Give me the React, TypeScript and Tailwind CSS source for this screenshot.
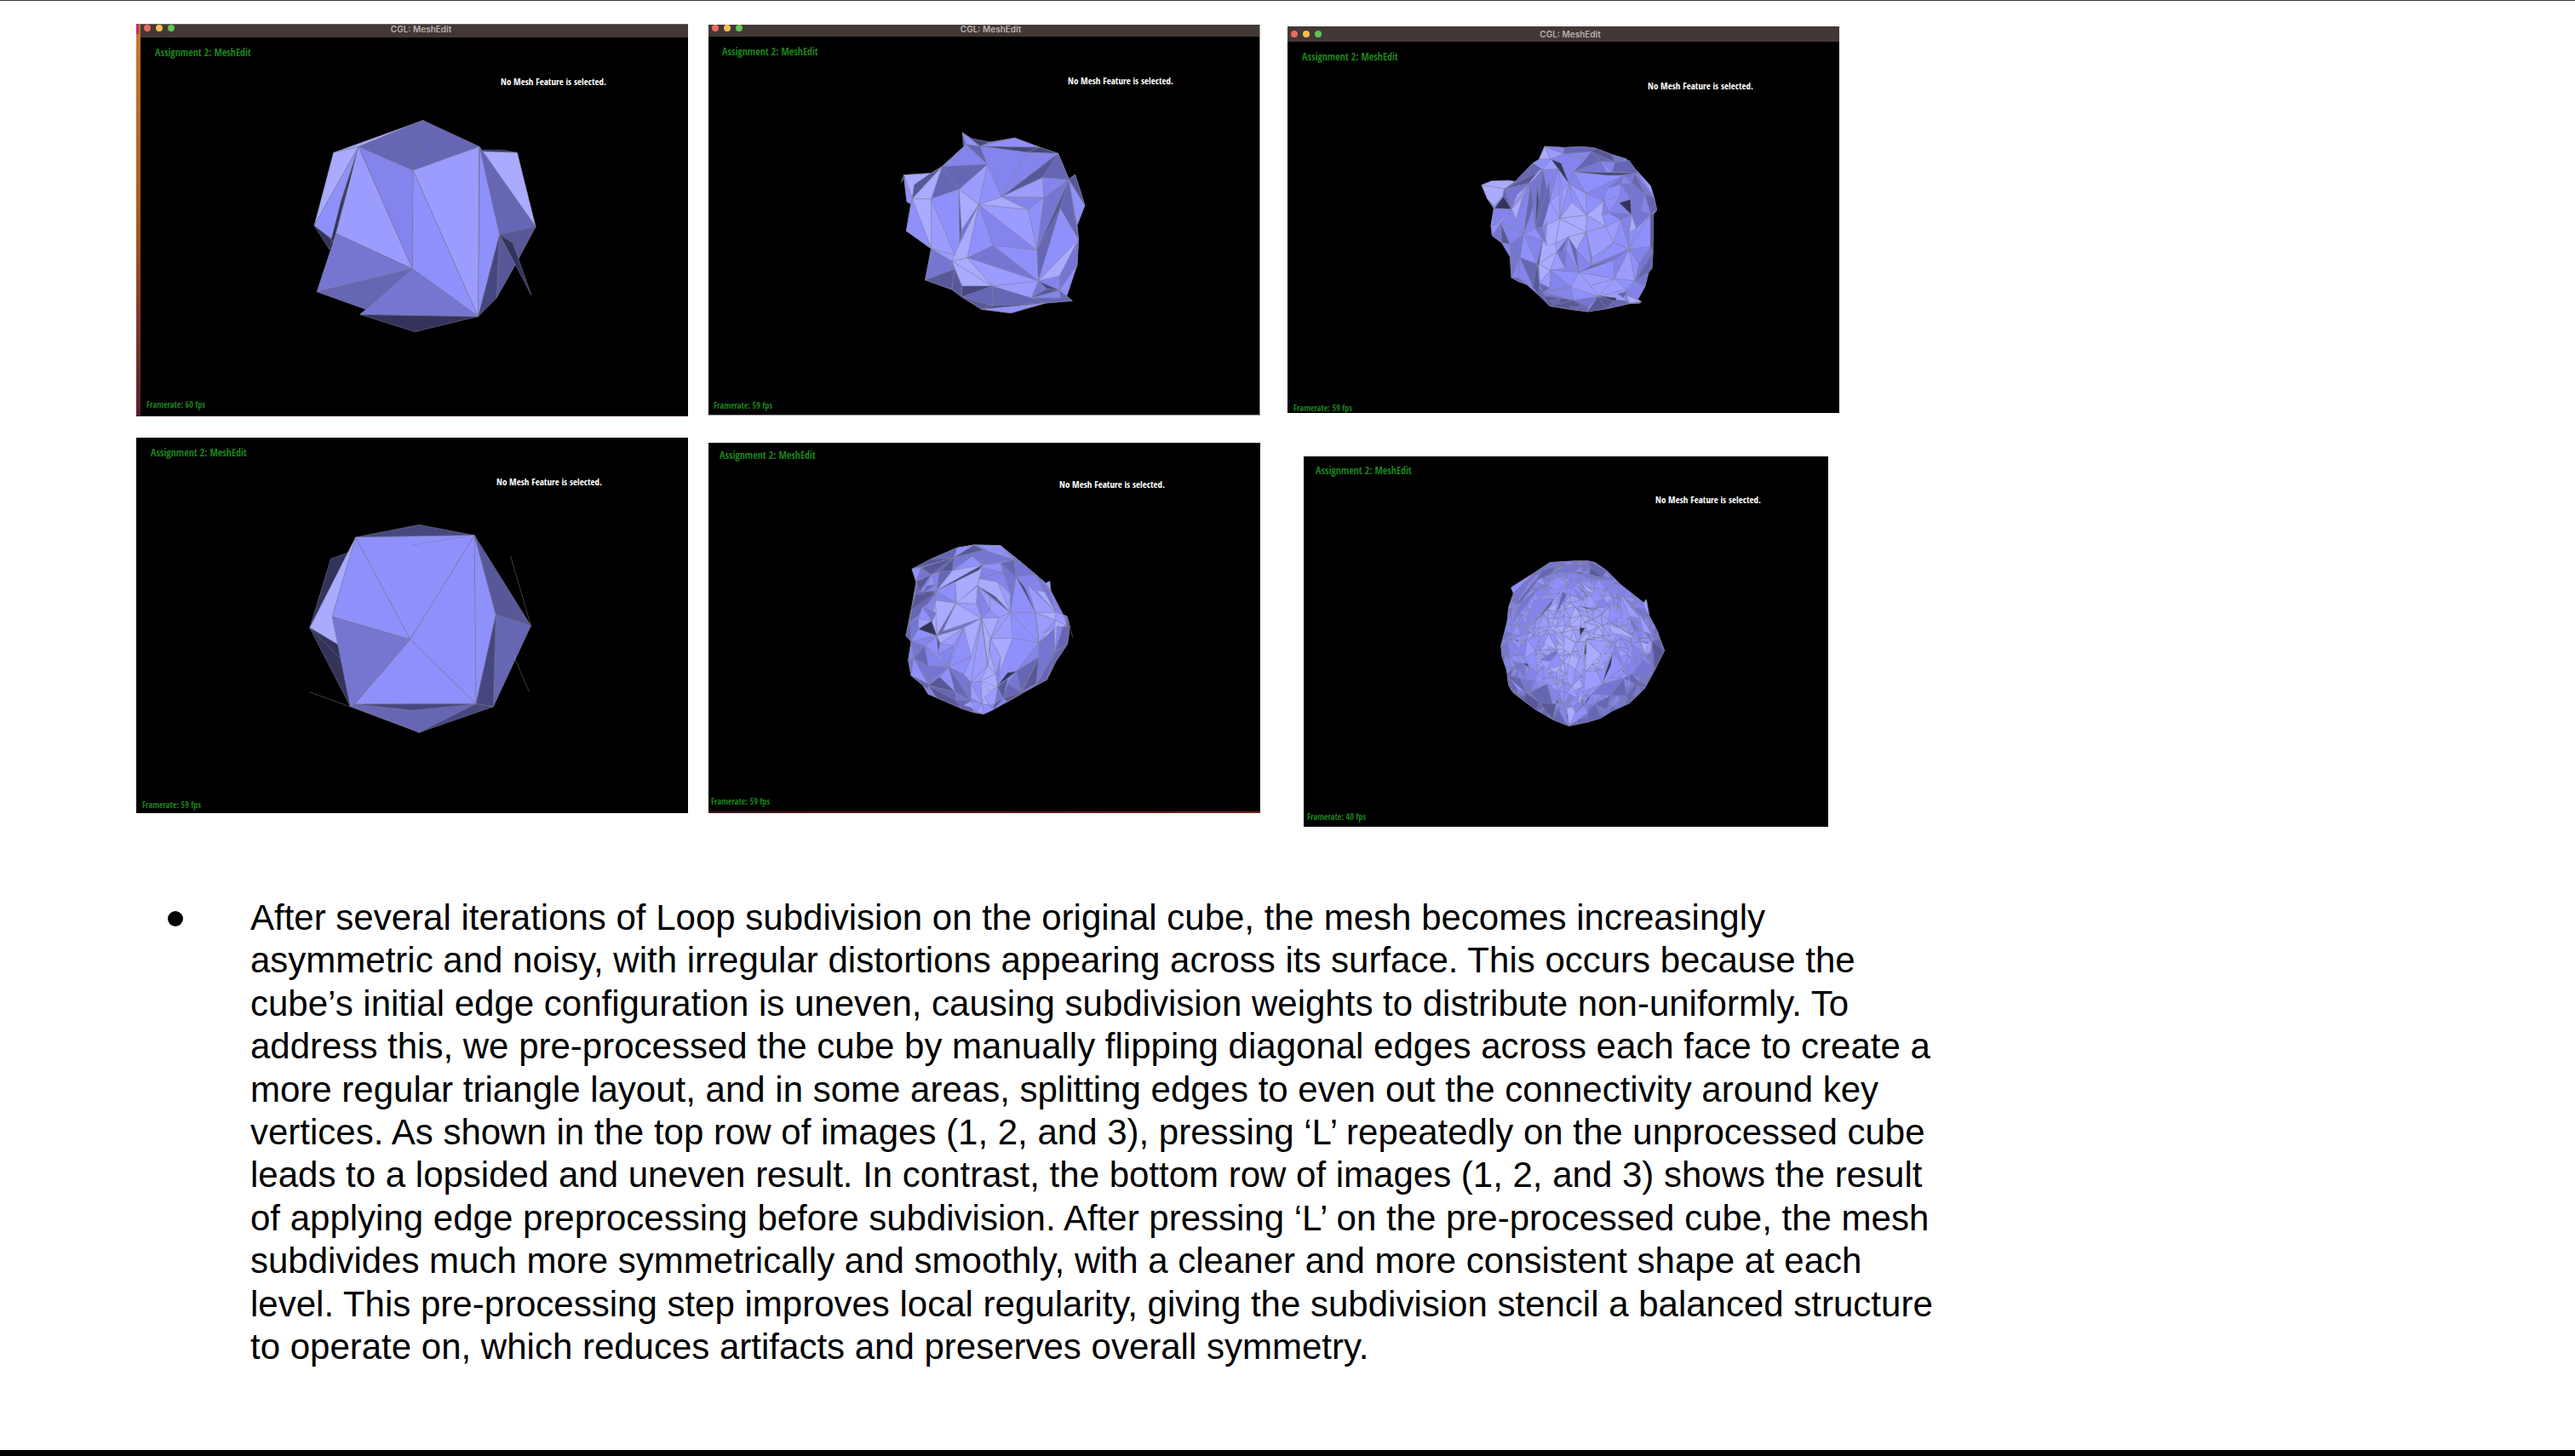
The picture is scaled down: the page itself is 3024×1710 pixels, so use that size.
import type { ReactNode } from "react";

/* Facet shades, from unlit to fully lit. */
const SHADES = [
  "#33335c",
  "#474780",
  "#585899",
  "#6666b5",
  "#7676d2",
  "#8484ec",
  "#9090fc",
  "#9c9cff",
  "#aaaaff",
];

/* Each facet is written as "x y x y x y:shade". */
type MeshProps = {
  transform: string;
  outline?: string;
  facets: string;
  lines?: string[];
  extra?: ReactNode;
};

function Mesh({ transform, outline, facets, lines = [], extra }: MeshProps) {
  const list = facets
    .trim()
    .split(/\s*\n\s*/)
    .flatMap((row) => row.split("|"))
    .map((item) => item.trim().split(":"));
  return (
    <g transform={transform} strokeLinejoin="round">
      {outline && (
        <polygon points={outline} fill={SHADES[5]} stroke="#77778c" strokeWidth={1} vectorEffect="non-scaling-stroke" />
      )}
      {extra}
      <g stroke="#80809a" strokeOpacity={0.6} strokeWidth={0.8}>
        {list.map(([points, shade], i) => (
          <polygon key={i} points={points} fill={SHADES[Number(shade)]} vectorEffect="non-scaling-stroke" />
        ))}
      </g>
      <g stroke="#777783" strokeOpacity={0.65} strokeWidth={0.8} fill="none">
        {lines.map((points) => (
          <polyline key={points} points={points} vectorEffect="non-scaling-stroke" />
        ))}
      </g>
    </g>
  );
}

const CUBE_A = `
580 508 823 394 648 487:8|580 508 648 487 528 765:8|648 487 528 765 575 812 600 680:6
528 765 577 815 570 850:0|648 487 597 700 574 812 580 830 588 790 622 600:0
648 487 794 917 587 793:7|587 793 794 917 535 998:4|535 998 794 917 667 1060:3
985 498 1040 499 1078 508 985 506:0|980 503 1078 508 1128 769:8
648 487 823 394 796 570:3|823 394 976 487 796 570:3|648 487 796 570 794 917:5
796 570 972 1085 794 917:6|796 570 975 487 972 1085:7|976 487 1030 796 972 1085:6
976 487 1128 769 1030 796:3|1030 796 1128 769 1072 905 1022 1020:2
1030 796 1022 1020 972 1085:1|1030 796 1066 826 1116 1010:0
652 1078 972 1085 801 1139:0|794 917 972 1085 652 1078:4`;

const CUBE_B = `
573 469 622 446 516 712:0|640 393 516 712 593 772 577 673:8|516 712 593 772 600 820 626 990:0
640 393 812 349 962 386:1|640 393 788 753 577 673:6|640 393 962 386 788 753:6|962 386 966 980 788 753:6
962 386 1020 666 966 980:6|962 386 1115 705 1020 666:2|1020 666 1115 705 1013 990:3
1020 666 1013 990 966 980:1|577 673 788 753 638 981 626 990:4|788 753 966 980 638 981:6
626 990 638 981 966 980 812 1081:3|638 981 966 980 795 1003:1|966 980 1013 990 812 1081:1`;

const LEVEL2_A_OUTLINE =
  "272 48 305 70 367 82 457 67 545 100 610 122 648 212 670 197 704 305 677 375 682 425 677 515 640 625 660 642 565 650 443 685 340 672 270 628 235 602 141 568 162 458 74 395 90 300 76 292 65 198 160 192 200 168 285 90";
const LEVEL2_A = `
272 48 285 90 275 97:3|272 48 335 96 285 90:6|300 68 367 82 335 96:1|335 96 457 67 545 100:6
335 96 545 100 500 118:1|545 100 610 122 500 118:1|285 90 335 96 360 160:3|285 90 360 160 200 168:5
335 96 500 118 410 275 360 160:5|500 118 610 122 410 275:5|610 122 555 207 410 275:2
610 122 648 215 555 207:3|410 275 555 207 560 277:7|555 207 648 215 560 277:5
410 275 560 277 505 320:5|410 275 505 320 330 302:8|360 160 410 275 330 302:6
360 160 330 302 260 248:7|200 168 360 160 260 248:3|200 168 260 248 162 282:3
65 198 160 192 102 232 95 282:8|65 198 95 282 90 300 76 292:6|65 198 55 225 68 208:1|160 192 200 168 95 282 102 232:2
200 168 162 282 95 282:8|95 282 162 282 162 458:8|95 282 162 458 74 395:6
162 282 245 480 162 458:7|162 282 260 248 262 440 245 480:6|162 458 245 480 235 502:7
260 248 330 302 268 395:8|260 248 268 395 263 440:1|268 395 330 302 262 450:4
330 302 290 490 235 502 262 440:8|235 502 378 590 270 590:8|290 490 378 590 235 502:8
330 302 380 447 290 490:6|330 302 535 463 380 447:5|330 302 505 320 535 463:7
505 320 560 277 535 463:6|560 277 648 215 535 463:4|648 215 618 315 535 463:2
618 315 540 572 535 463:3|618 315 682 425 540 572:6|648 215 682 425 618 315:3
648 215 704 305 677 375:6|648 212 670 197 704 305:2|380 447 535 463 540 572:6
380 447 540 572 290 490:4|290 490 540 572 378 590:7|682 425 615 555 540 572:8
682 425 677 515 615 605 615 555:4|677 515 640 625 615 605:6|540 572 615 555 615 605:5
540 572 615 605 570 600:1|540 572 570 600 515 632:4|540 572 378 590 515 632:7
570 600 615 605 515 632:2|515 632 615 605 620 632:5|515 632 620 632 615 605 660 642 565 650:3
378 590 515 632 565 650 380 660:3|270 628 378 590 380 660:3|270 590 378 590 270 628:1
380 660 565 650 340 672:1|340 672 565 650 443 685:6|270 628 380 660 340 672:2
162 458 235 502 245 530 141 568:4|141 568 245 530 235 602:2|245 530 270 590 270 628 235 602:2`;

const LEVEL3_A_OUTLINE =
  "282 66 350 70 415 67 460 72 520 95 570 110 610 155 655 205 668 248 677 290 665 305 663 440 660 495 648 510 635 560 610 605 622 612 618 618 580 620 500 638 433 648 370 640 300 628 262 590 218 552 190 542 165 528 160 455 130 405 97 380 93 345 103 285 80 250 60 202 95 188 155 186 178 190 240 125 262 112";
const LEVEL3_A = `
282 66 303 110 262 112:8|282 66 350 92 303 110:7|282 66 350 70 350 92:5|350 70 415 67 460 72 445 85 350 92:3
303 110 350 92 425 112 385 155 368 198:5|350 92 445 85 425 112:5|305 112 340 125 368 198:0
445 85 480 118 385 155 425 112:3|460 72 520 95 530 122 445 85:2|445 85 530 122 480 118:3
520 95 570 110 530 122:4|480 118 500 155 385 155:4|480 118 520 155 500 155:6|480 118 530 122 520 155:5
530 122 580 115 610 160 520 155:3|385 155 610 160 545 168 500 168:1|385 157 500 168 560 168 427 232:6
385 157 427 232 368 198:5|560 168 490 258 427 232:5|560 168 600 160 590 195:4|560 168 550 200 505 212:4
505 212 550 200 548 240 490 258:6|550 200 590 195 588 255:4|590 195 600 160 635 235:3|600 160 668 248 635 235:4
610 155 655 205 668 248:7|635 235 668 248 677 290 655 305:3|590 195 635 235 620 295 587 305:4
635 235 655 305 620 292:5|490 258 548 240 510 300:6|548 240 587 305 510 300:5|545 265 585 252 587 305:0
427 232 490 258 430 308:6|490 258 485 308 497 348 430 308:8|490 258 510 300 485 308:5
485 308 510 300 550 325 497 348:6|430 308 497 348 428 368:7|497 348 550 325 525 405:7|428 368 497 348 525 405 448 460:7
587 305 620 292 655 305 605 355:4|587 305 605 355 580 370:8|587 305 580 370 550 325:5|510 300 587 305 550 325:4
550 325 580 370 580 428:5|550 325 580 428 525 405:6|605 355 655 305 580 428:6|655 305 655 418 580 428:6|580 370 605 355 580 428:6
655 305 665 305 663 440 655 418:2|368 198 427 232 430 308:7|368 198 430 308 378 262:6
368 198 378 262 335 320:6|378 262 430 308 335 320:8|335 320 430 308 428 368:8|335 320 428 368 320 408:8
300 260 368 198 335 320:7|300 192 330 145 300 260:5|330 145 368 198 300 260:6|330 145 345 230 335 320:6
320 408 428 368 365 385:7|365 385 428 368 395 432:8|320 408 365 385 325 438:7|365 385 325 438 330 470:3
365 385 358 430 330 470:5|365 385 395 432 402 510:3|365 385 358 430 402 510:6|428 368 448 485 395 432:6
395 432 448 485 402 510:5|428 368 448 460 448 485:4|448 460 525 405 448 485:6|525 405 580 428 448 485:6
448 485 580 428 525 468:4|402 510 448 485 525 468:3|525 468 580 428 528 532:5|402 510 525 468 528 532:6
580 428 600 540 528 532:7|580 428 615 480 600 540:6|580 428 655 418 615 480:5|615 480 655 418 663 440 600 540:4|663 440 660 495 648 510 600 540:3
528 532 443 557 402 510:7|443 557 528 532 470 595:7|402 510 443 557 470 595 375 562:7
302 502 402 510 375 562:6|302 502 375 562 300 575:5|275 400 320 408 325 438 260 480:8|260 480 325 438 302 502:8
325 438 355 495 302 502:7|325 438 358 430 355 495:4|358 430 402 510 355 495:5
260 480 302 502 265 548:8|302 502 300 565 265 548:7|265 548 300 565 275 580:3
300 575 375 562 275 580:5|275 580 375 562 385 608:5|375 562 470 595 385 608:6|275 580 385 608 270 590:4
270 590 385 608 300 628:2|300 610 320 632 340 600:3|385 608 470 595 435 632:4|385 608 435 632 370 632:3
300 628 385 608 433 648:2|370 632 435 628 433 648:3|470 595 433 648 500 638:2|470 595 530 605 500 638:2|530 605 610 612 500 638:3
470 595 528 532 570 570:7|470 595 570 570 565 610:7|470 592 535 600 530 610:0
528 532 600 540 570 570:6|600 540 635 560 610 605 570 570:5|540 585 575 575 560 600:3
565 610 575 575 610 605 580 618:5|570 590 622 612 580 618:8|600 540 648 510 635 560:4
240 125 262 112 303 110 275 148:6|303 110 275 148 330 145:7|240 125 275 148 212 180:3
178 190 240 125 212 180 140 215:3|275 148 232 195 140 215 212 180:2|262 150 275 148 180 255:7
60 202 95 188 155 186 178 190 140 215:8|60 202 140 215 135 240 105 275 80 250:8
105 285 140 238 165 287:0|140 215 232 195 165 287:4|225 200 165 287 185 235:7
140 215 165 287 135 240:3|165 287 232 195 205 240:8|165 287 205 240 178 340:8|165 287 172 305 178 345:2
103 285 165 287 130 335 93 345:6|165 287 103 345 103 285:5|130 335 165 287 208 375:5|130 335 97 380 93 345:6
128 335 160 410 130 405:2|128 335 208 375 160 410:5|97 380 128 335 130 405:4
232 195 255 240 208 375:3|232 195 208 375 178 340:5|275 148 298 190 250 355:3
275 148 250 355 232 195:4|275 148 300 192 300 260:5|255 200 250 355 262 260:1|298 190 300 260 275 350 250 355:3
250 355 275 350 290 415:4|300 260 335 320 275 350:7|275 350 335 320 320 408 290 415:8|290 330 285 400 278 350:5
208 375 250 355 275 400:6|208 375 275 400 255 480:5|208 375 255 480 195 458:6
160 410 208 375 195 458:4|160 410 195 458 165 528:4|195 458 190 530 165 528:5
195 458 255 480 240 560:3|195 458 240 560 190 530:5|275 400 262 480 255 480:2|255 480 260 480 262 560:2
255 480 265 560 262 590 240 560:2|262 590 262 560 275 580 300 628:3|165 528 190 530 218 552 190 542:3`;

const LEVEL2_B_OUTLINE =
  "252 70 312 60 405 62 452 100 530 165 565 195 578 188 582 222 625 305 640 312 648 345 645 380 640 410 600 470 568 535 530 555 500 572 430 612 380 640 345 656 310 650 265 635 180 598 150 585 132 555 90 520 80 465 90 400 72 380 90 290 108 190 93 145 160 110";
const LEVEL2_B = `
252 70 312 60 240 105:6|312 60 345 78 240 105:2|312 60 405 62 452 112:6|312 60 452 112 345 78:4|345 78 452 112 400 75:6
345 78 452 112 342 130:4|240 105 345 78 342 130 305 100:4|305 100 342 130 235 150:6|240 105 305 100 235 150:4
252 70 240 105 160 110:3|93 145 160 110 240 105:2|93 145 125 140 108 190:6|125 140 240 105 160 165:2|160 165 240 105 190 155:3
108 190 125 140 160 165:4|108 190 160 165 120 225:2|240 105 235 150 190 155:2|190 155 235 150 180 220:3
160 165 190 155 175 200:5|160 165 175 200 145 205:6|145 205 175 200 130 230:3|342 130 235 150 180 222:8
342 130 325 200 250 265 245 190:8|180 220 342 130 330 148 245 190:1|180 222 245 190 248 265:6
180 222 248 265 175 255:5|108 190 120 225 180 222 160 232 105 235:3|130 230 175 225 160 234 140 233:0
105 235 178 228 90 290:2|90 290 178 228 115 310 85 330:3|90 290 85 330 72 380:2|130 278 175 255 178 300:5|175 228 178 300 175 255:4
175 255 248 265 180 378:8|175 255 180 378 162 330:8|115 320 130 278 165 328:6|130 278 178 300 165 328:4
248 265 338 318 200 365:8|248 265 200 365 183 378:3|115 320 165 328 115 357:7
115 357 162 328 180 380:0|115 357 180 380 90 400:6|85 330 115 320 115 357 90 400:4|72 380 85 330 90 400:3
248 265 325 205 320 268:8|320 268 325 205 338 318:5|248 265 320 268 338 318:7
338 318 275 352 200 365:4|275 352 180 380 200 365:3|275 352 180 380 192 408:8|275 352 192 408 240 415:7
180 380 192 408 185 440:2|192 408 240 415 185 445:6|275 352 302 455 222 490:6|275 352 222 490 240 415:6|240 415 222 490 185 445:5
275 352 338 318 302 455:8|338 318 360 485 300 545:7|338 318 300 545 275 515 302 455:7
338 318 370 390 360 485:8|338 318 400 315 370 390:8|338 318 348 400 360 485:8
325 205 368 245 368 290:7|325 205 368 290 338 318:5|338 318 368 290 400 315:6
325 205 440 298 368 245:8|368 245 440 298 400 315 368 290:7|330 178 395 190 440 298 325 205:8|325 205 440 298 385 240:2
330 178 342 140 415 155:5|342 130 405 125 415 155 342 140:6|405 125 452 112 460 172:3
405 125 460 172 440 232 415 155:4|395 190 440 232 440 298:7|330 178 415 155 440 232 395 190:5
452 100 530 165 460 172:4|460 172 440 298 440 232:4|460 172 528 298 440 298:6
460 172 528 165 600 298 528 298:5|460 172 490 210 528 298:1|530 165 575 220 600 298:4
500 200 600 298 528 298:7|530 220 560 225 600 298:8|565 195 578 188 582 222:7|575 220 582 222 625 305 600 298:5
440 298 528 298 540 405:6|440 298 540 405 448 388:6|440 298 448 388 370 390:7
400 315 440 298 370 390:7|528 298 598 325 540 405:7|528 298 535 350 540 405:6|600 298 625 305 640 345 598 325:7
528 298 600 298 598 325:8|598 325 640 345 595 355 540 405:8|598 325 595 355 555 370:6
540 405 595 355 595 435:4|595 355 620 350 597 435:8|620 350 648 345 640 410 597 435:3|605 345 625 350 597 435:5
540 405 597 438 530 550:4|640 410 600 470 568 535 530 555 597 438:3|597 438 580 500 568 535:2
370 390 448 388 400 520 405 455:8|448 388 540 405 460 505 395 555 405 500:6|370 390 405 455 388 515 365 430:7
370 390 365 430 388 515 360 485:8|360 485 388 515 335 540 300 545:8|360 485 335 540 300 545:7
335 540 388 515 395 560 340 620:8|335 540 395 560 365 575:8|395 555 430 510 462 505:0
540 405 540 455 460 505:5|460 505 540 455 478 580 430 580:3|462 505 430 550 478 580:4
540 455 530 550 480 575:2|540 455 530 480 478 580:3|395 560 430 530 415 600 380 640:2|395 560 415 600 385 620:4
415 600 430 550 478 580:3|430 612 478 580 530 555:1|415 600 478 580 430 612:2
395 560 385 620 365 625 350 595:7|350 595 365 625 340 620:8|300 545 335 540 340 620:6|300 545 340 620 300 600:7
340 620 365 625 380 640 345 656:6|275 515 300 545 300 608:4|222 490 302 455 275 515:6|222 490 275 515 300 608:4
222 490 300 608 245 578:3|222 490 245 578 190 525:6|222 490 190 525 150 550:5|150 487 222 490 150 550:4
137 415 222 490 150 487:5|137 415 180 385 185 445:6|137 415 185 445 222 490:6|90 400 180 380 137 415:5
90 400 137 415 100 460:4|100 460 137 415 150 487:3|80 465 100 460 90 520:4|100 460 150 550 90 520:6
100 460 150 487 150 550:4|150 555 190 525 245 578:2|150 555 245 578 250 610:3|90 520 150 550 150 585 132 555:3
150 555 250 610 265 635 180 598:2|132 555 150 570 180 598 150 585:5
245 578 300 608 255 612:4|250 610 300 608 310 650 265 635:3|275 625 300 610 320 645 300 632:7
300 610 340 620 320 648:6|320 648 340 620 345 656:7|635 310 640 345 650 352 640 330:2`;

const LEVEL3_B_OUTLINE =
  "240 62 300 58 330 56 375 56 400 62 440 90 490 140 560 195 572 205 580 192 590 248 620 305 628 330 644 372 610 440 575 505 520 558 460 585 420 610 370 625 308 638 250 615 190 580 150 550 110 520 95 495 88 440 72 395 68 355 90 270 95 220 112 170 104 150 175 105";
const LEVEL3_B = `
104 150 175 105 140 145 112 170:6|112 170 150 130 180 110 120 210:4|120 210 185 130 215 100 140 200:3|140 200 215 140 190 170 110 270:4
240 62 300 58 265 75 215 90:4|265 75 340 70 390 78 300 72:3|215 90 265 75 240 105 190 125:3|240 105 295 75 270 100:4
300 72 350 75 325 95 265 100:4|322 97 350 98 352 102:0|375 56 440 90 425 115 385 80:3|385 80 425 115 380 105:2|350 98 390 105 430 125 365 115:4
253 190 165 285 195 215:8|185 195 253 190 165 285 150 290:5|253 190 245 210 175 285:2|185 165 250 150 210 190:5
262 110 300 130 270 160 245 150:6|300 130 345 120 325 150 305 155:5|280 150 300 160 262 245 250 275:6|285 165 300 175 262 245:3
345 120 400 140 380 150:6|350 135 405 170 375 165:8|330 155 360 190 345 195:5|340 145 370 175 350 160:3
405 150 425 190 370 215:6|425 190 455 215 400 225:5|380 175 405 215 365 225 370 190:7|345 215 405 228 368 224:1
455 200 490 250 445 280:6|490 175 520 250 495 285:6|490 175 560 260 520 250:7|520 200 600 310 560 260:7
445 280 490 295 545 330 460 310:8|440 260 545 330 490 290:5|520 250 555 300 535 300:4|555 240 600 315 570 305:7
570 205 580 192 590 248 575 225:7|600 320 620 305 626 330 605 325:4|550 330 600 325 560 331:2
600 340 628 330 640 370 610 400:3|600 340 644 372 610 440:2|575 350 600 340 595 380 572 385:7|560 340 585 350 575 385:8
345 292 365 292 347 320:0|368 330 405 335 372 336:0|366 338 370 385 362 385:0|462 380 457 425 425 490 440 440:0
388 525 378 550 360 568 372 542:0|148 418 160 418 168 433:0|262 548 270 550 268 562:0|122 335 128 335 125 342:0
370 332 450 340 420 385:7|370 338 420 385 365 445:8|420 385 462 380 405 445:7|365 445 405 445 425 490 360 515:7|405 445 440 430 425 490:6
455 425 462 380 500 430 425 490:6|462 380 470 345 500 430:5|500 430 525 415 570 405 530 455:5|530 455 570 405 610 440 560 470:4|530 455 575 505 500 470:3
425 490 500 470 455 530 388 525:4|455 530 500 470 510 530:3|510 530 560 470 520 558:3|520 455 515 495 522 500:6
360 568 388 525 400 560:5|400 560 455 530 440 580:3|375 590 400 560 420 610 370 625:3|320 600 360 568 375 590 308 638:6
290 570 315 572 320 600:6|300 575 320 570 330 590 308 638:8|270 590 290 570 308 638:5|250 615 270 580 300 635:3
290 320 330 345 315 385 290 370:8|315 385 345 400 330 440 305 420:8|330 345 360 340 345 400:7|305 420 330 440 320 498 300 480:7
320 498 345 470 355 500 320 515:8|300 520 320 498 340 540:7|340 540 360 515 345 560:8|345 400 362 385 355 460 330 440:7
235 310 265 370 220 350:8|265 370 235 310 260 310:6|265 370 285 420 230 440:6|240 435 280 425 265 450 240 440:8|265 450 280 425 270 500:7
230 440 205 405 265 370:7|205 405 265 370 265 385 240 410:4|160 330 190 375 150 400:7|160 330 205 320 190 375:6|125 370 160 330 150 400:5
90 335 125 370 100 405:5|75 360 90 335 100 405:4|150 400 190 375 195 450:6|168 433 200 450 190 480 155 470:5|105 410 150 420 155 470:4
95 460 135 470 155 515 110 510:3|100 470 110 480 150 515 130 512:6|135 470 185 480 170 520:4|170 520 230 490 250 560 205 555:3|230 490 275 520 260 560:5
155 520 205 555 190 580 150 550:2|205 555 262 560 250 615:2|195 450 230 490 190 480:6|205 320 235 310 220 350:6`;

/* Deterministic noise, so that the fine tessellation is the same on every render. */
function noise(a: number, b: number) {
  const v = Math.sin(a * 127.1 + b * 311.7) * 43758.5453;
  return v - Math.floor(v);
}

/* Small jittered triangles that fill a disc, brighter towards its middle. */
function Tessellation({ clip, outline }: { clip: string; outline: string }) {
  const step = 27;
  const point = (i: number, j: number) => [
    Math.round(50 + (i + (noise(i, j) - 0.5) * 0.9) * step),
    Math.round(40 + (j + (noise(j + 40, i) - 0.5) * 0.9) * step),
  ];
  const cells: { points: string; shade: number }[] = [];
  for (let i = 0; i < 23; i++) {
    for (let j = 0; j < 23; j++) {
      const [a, b, c, d] = [point(i, j), point(i + 1, j), point(i + 1, j + 1), point(i, j + 1)];
      const split = noise(i + 9, j + 3) > 0.5 ? [[a, b, c], [a, c, d]] : [[a, b, d], [b, c, d]];
      split.forEach((tri, k) => {
        const x = (tri[0][0] + tri[1][0] + tri[2][0]) / 3;
        const y = (tri[0][1] + tri[1][1] + tri[2][1]) / 3;
        const r = Math.hypot((x - 335) / 290, (y - 330) / 290);
        const shade = 7.9 - r * r * 4.4 + (noise(i * 2 + k, j + 70) - 0.5) * 1.5;
        cells.push({ points: tri.map((p) => p.join(" ")).join(" "), shade: Math.max(2, Math.min(8, Math.round(shade))) });
      });
    }
  }
  return (
    <>
      <clipPath id={clip}>
        <polygon points={outline} />
      </clipPath>
      <g clipPath={`url(#${clip})`} stroke="#80809a" strokeOpacity={0.6} strokeWidth={0.8}>
        {cells.map((cell) => (
          <polygon key={cell.points} points={cell.points} fill={SHADES[cell.shade]} vectorEffect="non-scaling-stroke" />
        ))}
      </g>
    </>
  );
}

type CaptureProps = {
  label: string;
  frame: string;
  size: [number, number];
  fps: number;
  inset: string;
  heading: string;
  status: string;
  titleBar?: string;
  backdrop?: ReactNode;
  children: ReactNode;
};

function Capture({ label, frame, size, fps, inset, heading, status, titleBar, backdrop, children }: CaptureProps) {
  return (
    <figure aria-label={label} className={`relative flex flex-col overflow-hidden bg-black ${frame}`}>
      <svg viewBox={`0 0 ${size[0]} ${size[1]}`} className="absolute inset-0 h-full w-full" aria-hidden="true">
        {children}
      </svg>
      {backdrop}
      {titleBar && (
        <div className={`relative flex justify-center bg-[#423836] pl-4 ${titleBar}`}>
          <div className="absolute left-1 flex gap-[6px]">
            <span className="size-2 rounded-full bg-[#ed6a5e]" />
            <span className="size-2 rounded-full bg-[#f5bf4f]" />
            <span className="size-2 rounded-full bg-[#61c554]" />
          </div>
          <span className="font-['Inter',sans-serif] text-[10px] leading-[10px] font-semibold text-[#b9b1af]">
            CGL: MeshEdit
          </span>
        </div>
      )}
      <div
        className={`relative flex flex-1 flex-col font-['Open_Sans_Condensed','Open_Sans',sans-serif] font-bold whitespace-nowrap ${inset}`}
      >
        <p className={`ml-[10px] text-[12px] leading-4 text-[#1c821c] ${heading}`}>Assignment 2: MeshEdit</p>
        <p className={`mt-[18px] text-[11px] leading-4 text-white ${status}`}>No Mesh Feature is selected.</p>
        <p className="mt-auto text-[10px] leading-3 text-[#1c821c]">Framerate: {fps} fps</p>
      </div>
    </figure>
  );
}

export default function App() {
  return (
    <main className="flex min-h-screen flex-col border-t border-[#3c3c3c] bg-white font-['Liberation_Sans',Arial,sans-serif] text-black">
      <section className="ml-40 flex max-w-[2000px] items-start gap-6 pt-[27px]">
        <div className="flex flex-1 flex-col gap-[25px]">
          <Capture
            label="Unprocessed cube, first subdivision"
            frame="aspect-[648/461]"
            size={[648, 461]}
            fps={60}
            inset="pl-3 pb-2"
            heading="mt-[10px]"
            status="ml-[416px]"
            titleBar="ml-[5px] h-4 items-start border-t border-[#6d6462]"
            backdrop={
              <>
                <div className="absolute inset-y-0 left-0 w-[5px] bg-linear-to-b from-[#c87a2c] via-[#a85a1c] to-[#5a1c2c]" />
                <div className="absolute top-0 left-0 h-3 w-[3px] bg-[#c02a78]" />
                <div className="absolute inset-x-0 bottom-0 h-px bg-[#3a1418]" />
              </>
            }
          >
            <Mesh transform="translate(-20 -18) scale(.43367 .33333)" facets={CUBE_A} />
          </Capture>
          <Capture
            label="Pre-processed cube, first subdivision"
            frame="aspect-[648/441]"
            size={[648, 441]}
            fps={59}
            inset="pl-[7px] pb-1"
            heading="mt-[10px]"
            status="ml-[416px]"
          >
            <Mesh
              transform="translate(-20 -14) scale(.43367 .33333)"
              facets={CUBE_B}
              lines={[
                "791 421 940 390",
                "1060 460 1115 705",
                "1020 666 1110 937",
                "516 939 626 990",
                "516 712 599 820",
                "640 985 812 1081",
              ]}
            />
          </Capture>
        </div>
        <div className="flex flex-1 flex-col gap-8 pt-px">
          <Capture
            label="Unprocessed cube, second subdivision"
            frame="aspect-[648/459] border-r border-b border-[#9a9a9a]"
            size={[648, 459]}
            fps={59}
            inset="pl-[6px] pb-[5px]"
            heading="mt-[10px]"
            status="ml-[416px]"
            titleBar="h-[14px] items-start"
          >
            <Mesh transform="translate(208 111) scale(.33333)" outline={LEVEL2_A_OUTLINE} facets={LEVEL2_A} />
          </Capture>
          <Capture
            label="Pre-processed cube, second subdivision"
            frame="aspect-[648/435]"
            size={[648, 435]}
            fps={59}
            inset="pl-[3px] pb-2"
            heading="mt-[7px]"
            status="ml-[409px]"
            backdrop={
              <div className="absolute inset-x-0 bottom-0 h-[2px] bg-linear-to-r from-[#4a1420] via-[#5a1c1c] to-[#7a2a1c]" />
            }
          >
            <Mesh
              transform="translate(208 100) scale(.33333)"
              outline={LEVEL2_B_OUTLINE}
              facets={LEVEL2_B}
              lines={["640 320 650 350 660 388", "636 308 642 330 630 350"]}
            />
          </Capture>
        </div>
        <div className="ml-2 flex flex-1 flex-col gap-[51px] pt-[3px]">
          <Capture
            label="Unprocessed cube, third subdivision"
            frame="aspect-[648/454]"
            size={[648, 454]}
            fps={59}
            inset="pl-[7px]"
            heading="mt-[10px]"
            status="ml-[416px]"
            titleBar="h-[18px] items-center"
          >
            <Mesh transform="translate(208 119) scale(.33333)" outline={LEVEL3_A_OUTLINE} facets={LEVEL3_A} />
          </Capture>
          <Capture
            label="Pre-processed cube, third subdivision"
            frame="mr-[13px] ml-[19px] aspect-[616/435]"
            size={[616, 435]}
            fps={40}
            inset="pl-1 pb-[6px]"
            heading="mt-[9px]"
            status="ml-[409px]"
          >
            <Mesh
              transform="translate(209 104) scale(.33333)"
              outline={LEVEL3_B_OUTLINE}
              facets={LEVEL3_B}
              extra={<Tessellation clip="fine-mesh" outline={LEVEL3_B_OUTLINE} />}
            />
          </Capture>
        </div>
      </section>
      <ul className="mt-[82px] mb-16 ml-[197px] max-w-[2087px]">
        <li className="flex items-start text-[42px] leading-[1.2]">
          <span aria-hidden="true" className="mt-[17px] mr-[79px] size-[18px] shrink-0 rounded-full bg-black" />
          <p>
            After several iterations of Loop subdivision on the original cube, the mesh becomes increasingly asymmetric
            and noisy, with irregular distortions appearing across its surface. This occurs because the cube’s initial
            edge configuration is uneven, causing subdivision weights to distribute non-uniformly. To address this, we
            pre-processed the cube by manually flipping diagonal edges across each face to create a more regular triangle
            layout, and in some areas, splitting edges to even out the connectivity around key vertices. As shown in the
            top row of images (1, 2, and 3), pressing ‘L’ repeatedly on the unprocessed cube leads to a lopsided and
            uneven result. In contrast, the bottom row of images (1, 2, and 3) shows the result of applying edge
            preprocessing before subdivision. After pressing ‘L’ on the pre-processed cube, the mesh subdivides much more
            symmetrically and smoothly, with a cleaner and more consistent shape at each level. This pre-processing step
            improves local regularity, giving the subdivision stencil a balanced structure to operate on, which reduces
            artifacts and preserves overall symmetry.
          </p>
        </li>
      </ul>
      <div className="mt-auto h-[7px] bg-black" />
    </main>
  );
}
